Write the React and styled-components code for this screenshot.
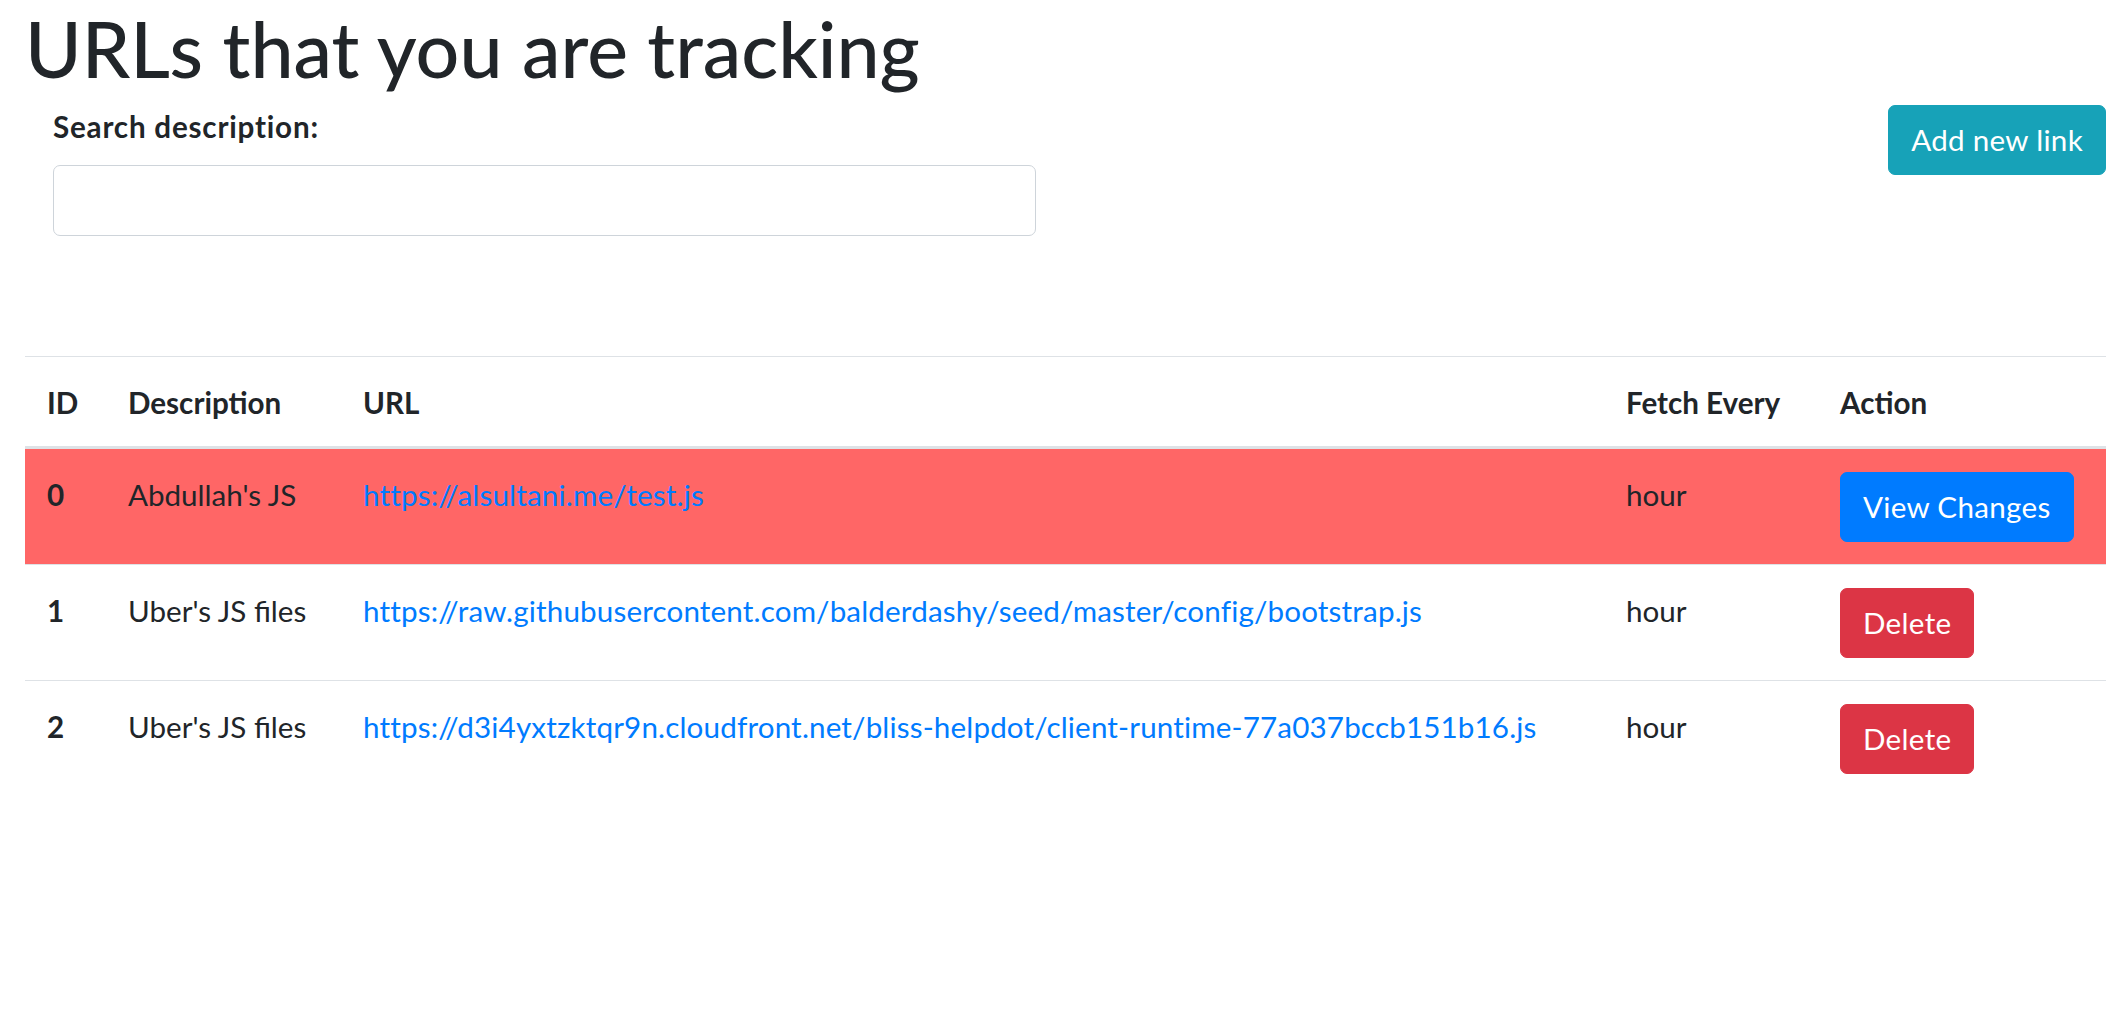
import styled, { createGlobalStyle } from "styled-components";

const GlobalStyle = createGlobalStyle`
  body {
    margin: 0;
    background: #fff;
    color: #212529;
    font-family: "Segoe UI", Lato, "Liberation Sans", sans-serif;
    font-size: 29.6px;
    line-height: 44px;
  }
  * {
    box-sizing: border-box;
  }
`;

const links = [
  {
    id: 0,
    description: "Abdullah's JS",
    url: "https://alsultani.me/test.js",
    every: "hour",
    changed: true,
  },
  {
    id: 1,
    description: "Uber's JS files",
    url: "https://raw.githubusercontent.com/balderdashy/seed/master/config/bootstrap.js",
    every: "hour",
    changed: false,
  },
  {
    id: 2,
    description: "Uber's JS files",
    url: "https://d3i4yxtzktqr9n.cloudfront.net/bliss-helpdot/client-runtime-77a037bccb151b16.js",
    every: "hour",
    changed: false,
  },
];

const colors = {
  info: "#17a2b8",
  primary: "#007bff",
  danger: "#dc3545",
};

const App = () => {
  return (
    <>
      <GlobalStyle />
      <Page>
        <Title>URLs that you are tracking</Title>
        <TopRow>
          <SearchGroup>
            <Label htmlFor="search">Search description:</Label>
            <SearchInput id="search" type="text" />
          </SearchGroup>
          <Button variant="info">Add new link</Button>
        </TopRow>

        <Table>
          <colgroup>
            <col style={{ width: 81 }} />
            <col style={{ width: 235 }} />
            <col style={{ width: 1263 }} />
            <col style={{ width: 214 }} />
            <col style={{ width: 288 }} />
          </colgroup>
          <thead>
            <tr>
              <HeadCell>ID</HeadCell>
              <HeadCell>Description</HeadCell>
              <HeadCell>URL</HeadCell>
              <HeadCell>Fetch Every</HeadCell>
              <HeadCell>Action</HeadCell>
            </tr>
          </thead>
          <tbody>
            {links.map((link) => (
              <Row key={link.id} changed={link.changed}>
                <IdCell>{link.id}</IdCell>
                <Cell>{link.description}</Cell>
                <Cell>
                  <UrlLink href={link.url}>{link.url}</UrlLink>
                </Cell>
                <Cell>{link.every}</Cell>
                <Cell>
                  {link.changed ? (
                    <Button variant="primary">View Changes</Button>
                  ) : (
                    <Button variant="danger">Delete</Button>
                  )}
                </Cell>
              </Row>
            ))}
          </tbody>
        </Table>
      </Page>
    </>
  );
};

const Page = styled.div`
  padding: 0 15px 0 25px;
`;

const Title = styled.h1`
  margin: 0;
  padding-top: 2px;
  font-size: 77px;
  font-weight: 500;
  line-height: 1.2;
  color: #212529;
`;

const TopRow = styled.div`
  display: flex;
  justify-content: space-between;
  align-items: flex-start;
  margin-top: 11px;
`;

const SearchGroup = styled.div`
  display: flex;
  flex-direction: column;
  padding-left: 28px;
  width: 1011px;
`;

const Label = styled.label`
  font-weight: 700;
  letter-spacing: 0.8px;
  margin-bottom: 16px;
`;

const SearchInput = styled.input`
  height: 71px;
  width: 100%;
  border: 1px solid #ced4da;
  border-radius: 7px;
  padding: 0 22px;
  font: inherit;
  color: #495057;
  outline: none;
`;

const Button = styled.button`
  display: inline-block;
  font: inherit;
  letter-spacing: 0.3px;
  line-height: 44px;
  padding: 12px 22px;
  color: #fff;
  background-color: ${(p) => colors[p.variant]};
  border: 1px solid ${(p) => colors[p.variant]};
  border-radius: 7px;
  cursor: pointer;
  white-space: nowrap;
`;

const Table = styled.table`
  width: 100%;
  margin-top: 120px;
  border-collapse: collapse;
  table-layout: fixed;
`;

const HeadCell = styled.th`
  text-align: left;
  font-weight: 700;
  padding: 24px 22px 21px;
  border-top: 1px solid #dee2e6;
  border-bottom: 3px solid #dee2e6;
  white-space: nowrap;
`;

const Row = styled.tr`
  background-color: ${(p) => (p.changed ? "#ff6666" : "transparent")};
`;

const Cell = styled.td`
  padding: 23px 22px 22px;
  vertical-align: top;
  line-height: 46px;
  border-top: 1px solid #dee2e6;
  white-space: nowrap;
`;

const IdCell = styled(Cell)`
  font-weight: 700;
`;

const UrlLink = styled.a`
  color: #007bff;
  letter-spacing: 0.15px;
  text-decoration: none;
`;

export default App;
